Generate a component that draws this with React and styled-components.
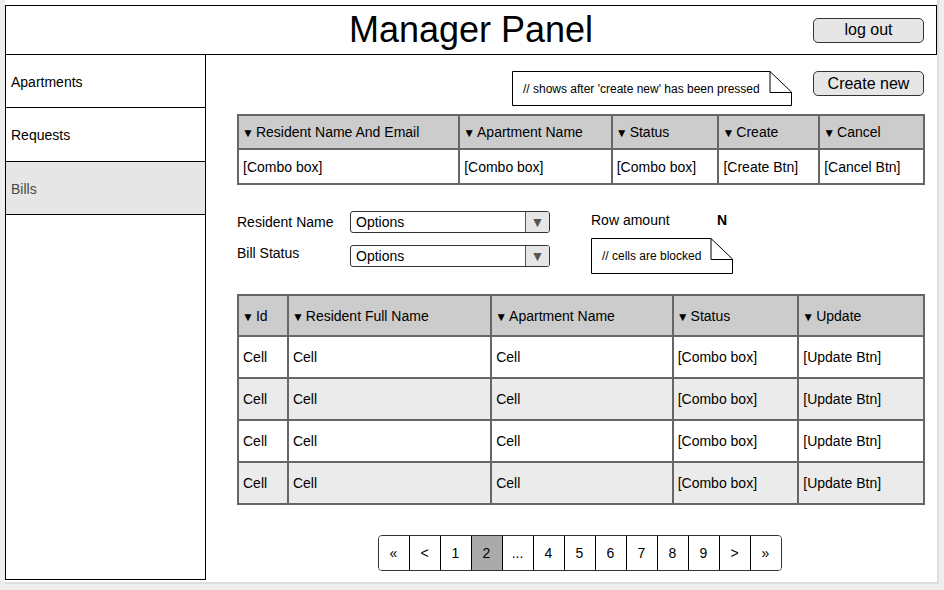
import React from "react";
import styled, { createGlobalStyle } from "styled-components";

const GlobalStyle = createGlobalStyle`
  body {
    margin: 0;
    background: #eeeeee;
    font-family: "Liberation Sans", Arial, sans-serif;
    color: #000;
  }
  * { box-sizing: border-box; }
`;

const Panel = styled.div`
  width: 934px;
  height: 584px;
  margin-left: 5px;
  background: #fff;
  border-right: 2px solid #dedede;
  border-bottom: 2px solid #dedede;
  display: flex;
  flex-direction: column;
  padding-top: 5px;
`;

const Header = styled.header`
  height: 50px;
  width: 932px;
  border: 1px solid #000;
  display: grid;
  grid-template-columns: 1fr auto 1fr;
  align-items: center;
`;

const Title = styled.h1`
  grid-column: 2;
  margin: 0;
  font-size: 36px;
  font-weight: normal;
  line-height: 1;
`;

const Button = styled.button`
  width: 111px;
  height: 25px;
  padding: 0;
  font-family: inherit;
  font-size: 16px;
  color: #000;
  background: #e6e6e6;
  border: 1px solid #333;
  border-radius: 5px;
`;

const LogoutButton = styled(Button)`
  grid-column: 3;
  justify-self: end;
  margin-right: 12px;
`;

const Body = styled.div`
  flex: 1;
  display: flex;
  width: 932px;
`;

const Sidebar = styled.nav`
  width: 201px;
  border: 1px solid #000;
  border-top: none;
  margin-bottom: 2px;
  display: flex;
  flex-direction: column;
`;

const NavItem = styled.div`
  height: ${(p) => p.$h}px;
  border-bottom: 1px solid #000;
  padding: 1px 0 0 5px;
  display: flex;
  align-items: center;
  font-size: 14px;
  background: ${(p) => (p.$active ? "#e6e6e6" : "#fff")};
  color: ${(p) => (p.$active ? "#4a4a4a" : "#000")};
`;

const Main = styled.main`
  flex: 1;
  display: flex;
  flex-direction: column;
  padding: 16px 12px 0 31px;
`;

const TopRow = styled.div`
  display: flex;
  justify-content: flex-end;
  align-items: flex-start;
  gap: 21px;
  padding-right: 1px;
`;

const NoteBox = styled.div`
  position: relative;
  width: ${(p) => p.$w}px;
  height: ${(p) => p.$h}px;
  display: flex;
  align-items: center;
  padding-left: 11px;
  font-size: 12px;
`;

const NoteShape = styled.svg`
  position: absolute;
  inset: 0;
`;

const NoteText = styled.span`
  position: relative;
`;

const Table = styled.table`
  width: 688px;
  border-collapse: collapse;
  margin-top: ${(p) => p.$mt}px;
  font-size: 14px;
`;

const Th = styled.th`
  height: ${(p) => p.$h}px;
  background: #cccccc;
  border: 2px solid #666;
  text-align: left;
  font-weight: normal;
  padding: 0 0 0 3px;
`;

const Td = styled.td`
  height: ${(p) => p.$h}px;
  border: 2px solid #666;
  padding: 0 0 0 4px;
  background: ${(p) => (p.$alt ? "#ebebeb" : "#fff")};
`;

const Arrow = styled.span`
  font-size: 12px;
  margin-right: 2px;
`;

const Filters = styled.div`
  display: flex;
  align-items: flex-start;
  gap: 41px;
  margin-top: 26px;
`;

const FilterGrid = styled.div`
  display: grid;
  grid-template-columns: 113px 200px;
  grid-auto-rows: 22px;
  align-content: start;
  row-gap: 12px;
  align-items: center;
  font-size: 14px;
`;

const FilterLabel = styled.span`
  margin-top: ${(p) => (p.$raise ? "-6px" : "0")};
`;

const Select = styled.div`
  height: 22px;
  border: 1px solid #333;
  border-radius: 3px;
  display: flex;
  overflow: hidden;
`;

const SelectValue = styled.span`
  flex: 1;
  padding-left: 5px;
  display: flex;
  align-items: center;
`;

const SelectCaret = styled.span`
  width: 24px;
  border-left: 1px solid #555;
  background: #e6e6e6;
  color: #555;
  font-size: 14px;
  display: flex;
  align-items: center;
  justify-content: center;
`;

const RowAmount = styled.div`
  display: flex;
  flex-direction: column;
  gap: 9px;
  font-size: 14px;
`;

const AmountLine = styled.div`
  display: flex;
  height: 18px;
  align-items: center;
`;

const AmountLabel = styled.span`
  width: 126px;
`;

const AmountValue = styled.b``;

const Pager = styled.div`
  align-self: center;
  margin-top: 30px;
  margin-right: 3px;
  display: flex;
  border: 1px solid #333;
  border-radius: 4px;
  overflow: hidden;
`;

const PageCell = styled.div`
  width: 31px;
  height: 34px;
  display: flex;
  align-items: center;
  justify-content: center;
  font-size: 14px;
  border-right: 1px solid #000;
  background: ${(p) => (p.$active ? "#aaaaaa" : "#fff")};
  &:last-child { border-right: none; width: 30px; }
`;

function Note({ w, h, children }) {
  const f = 22;
  return (
    <NoteBox $w={w} $h={h}>
      <NoteShape width={w} height={h}>
        <path
          d={`M0.5 0.5 H${w - f} L${w - 0.5} ${f - 1} V${h - 0.5} H0.5 Z`}
          fill="#fff"
          stroke="#000"
        />
        <path d={`M${w - f} 0.5 V${f - 0.5} H${w - 0.5}`} fill="none" stroke="#000" />
      </NoteShape>
      <NoteText>{children}</NoteText>
    </NoteBox>
  );
}

const createCols = [
  ["Resident Name And Email", 222, "[Combo box]"],
  ["Apartment Name", 153, "[Combo box]"],
  ["Status", 107, "[Combo box]"],
  ["Create", 101, "[Create Btn]"],
  ["Cancel", 105, "[Cancel Btn]"],
];

const billCols = [
  ["Id", 50],
  ["Resident Full Name", 204],
  ["Apartment Name", 182],
  ["Status", 126],
  ["Update", 126],
];

const billRow = ["Cell", "Cell", "Cell", "[Combo box]", "[Update Btn]"];

const pages = ["«", "<", "1", "2", "...", "4", "5", "6", "7", "8", "9", ">", "»"];

export default function App() {
  return (
    <>
      <GlobalStyle />
      <Panel>
        <Header>
          <Title>Manager Panel</Title>
          <LogoutButton>log out</LogoutButton>
        </Header>
        <Body>
          <Sidebar>
            <NavItem $h={53}>Apartments</NavItem>
            <NavItem $h={54}>Requests</NavItem>
            <NavItem $h={53} $active>Bills</NavItem>
          </Sidebar>
          <Main>
            <TopRow>
              <Note w={280} h={35}>// shows after 'create new' has been pressed</Note>
              <Button>Create new</Button>
            </TopRow>

            <Table $mt={8}>
              <colgroup>
                {createCols.map(([name, w]) => (
                  <col key={name} style={{ width: w }} />
                ))}
              </colgroup>
              <thead>
                <tr>
                  {createCols.map(([name]) => (
                    <Th key={name} $h={34}>
                      <Arrow>▼</Arrow>
                      {name}
                    </Th>
                  ))}
                </tr>
              </thead>
              <tbody>
                <tr>
                  {createCols.map(([name, , value]) => (
                    <Td key={name} $h={35}>{value}</Td>
                  ))}
                </tr>
              </tbody>
            </Table>

            <Filters>
              <FilterGrid>
                <FilterLabel>Resident Name</FilterLabel>
                <Select>
                  <SelectValue>Options</SelectValue>
                  <SelectCaret>▼</SelectCaret>
                </Select>
                <FilterLabel $raise>Bill Status</FilterLabel>
                <Select>
                  <SelectValue>Options</SelectValue>
                  <SelectCaret>▼</SelectCaret>
                </Select>
              </FilterGrid>
              <RowAmount>
                <AmountLine>
                  <AmountLabel>Row amount</AmountLabel>
                  <AmountValue>N</AmountValue>
                </AmountLine>
                <Note w={142} h={36}>// cells are blocked</Note>
              </RowAmount>
            </Filters>

            <Table $mt={20}>
              <colgroup>
                {billCols.map(([name, w]) => (
                  <col key={name} style={{ width: w }} />
                ))}
              </colgroup>
              <thead>
                <tr>
                  {billCols.map(([name]) => (
                    <Th key={name} $h={41}>
                      <Arrow>▼</Arrow>
                      {name}
                    </Th>
                  ))}
                </tr>
              </thead>
              <tbody>
                {[0, 1, 2, 3].map((r) => (
                  <tr key={r}>
                    {billRow.map((v, i) => (
                      <Td key={i} $h={42} $alt={r % 2 === 1}>{v}</Td>
                    ))}
                  </tr>
                ))}
              </tbody>
            </Table>

            <Pager>
              {pages.map((p) => (
                <PageCell key={p} $active={p === "2"}>{p}</PageCell>
              ))}
            </Pager>
          </Main>
        </Body>
      </Panel>
    </>
  );
}
